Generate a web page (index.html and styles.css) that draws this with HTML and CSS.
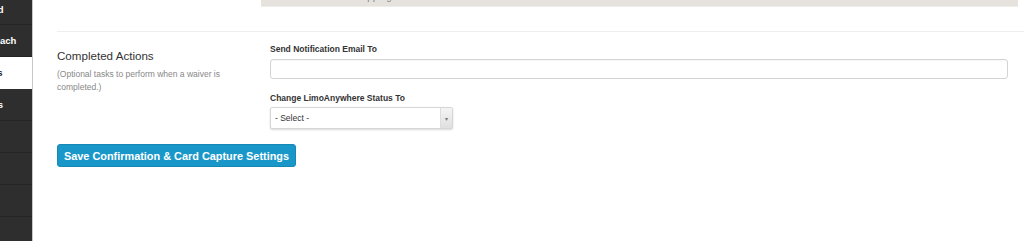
FILE: index.html
```html
<!DOCTYPE html>
<html lang="en">
<head>
  <meta charset="UTF-8" />
  <title>Confirmation Settings</title>
  <link rel="stylesheet" href="styles.css">
</head>
<body>
  <div class="layout">
    <div class="sidebar">
      <ul class="side-menu">
        <li class="first">Signed</li>
        <li>Approach</li>
        <li class="active">Emails</li>
        <li>Details</li>
        <li></li>
        <li></li>
        <li></li>
        <li></li>
      </ul>
    </div>

    <div class="main">
      <div class="note-box">
        <span class="note-text">Waiver shipping</span>
      </div>

      <hr class="divider">

      <div class="row">
        <div class="row-info">
          <h3>Completed Actions</h3>
          <p>(Optional tasks to perform when a waiver is completed.)</p>
        </div>
        <div class="row-fields">
          <label for="notify">Send Notification Email To</label>
          <input type="text" id="notify" class="text-input">

          <label for="status">Change LimoAnywhere Status To</label>
          <div class="select-box">
            <span class="select-value">- Select -</span>
            <span class="select-arrow">&#9662;</span>
          </div>
        </div>
      </div>

      <button class="save-btn">Save Confirmation &amp; Card Capture Settings</button>
    </div>
  </div>
</body>
</html>
```

FILE: styles.css
```css
body {
  margin: 0;
  font-family: 'Liberation Sans', Arial, sans-serif;
  background: #fff;
  color: #333;
  overflow: hidden;
}

.layout {
  display: flex;
  height: 241px;
}

/* Sidebar */
.sidebar {
  width: 32px;
  flex-shrink: 0;
  background: #2e2e2e;
  border-right: 1px solid #c8c8c8;
  overflow: hidden;
}

.side-menu {
  list-style: none;
  margin: 0 0 0 -28px;
  padding: 0;
  width: 60px;
}

.side-menu li {
  height: 31px;
  border-bottom: 1px solid #242424;
  color: #fff;
  font-size: 9.5px;
  font-weight: bold;
  line-height: 31px;
  white-space: nowrap;
}

.side-menu li.first {
  height: 24px;
  line-height: 20px;
}

.side-menu li.active {
  background: #fff;
  color: #222;
  border-bottom-color: #fff;
}

/* Main */
.main {
  flex: 1;
  padding: 0 16px 0 24px;
}

.note-box {
  margin: 0 -10px 0 204px;
  height: 6px;
  background: #e6e3df;
  border-bottom: 1px solid #efedea;
  position: relative;
  overflow: hidden;
}

.note-text {
  position: absolute;
  left: 60px;
  top: -9px;
  font-size: 10px;
  color: #888;
}

.divider {
  border: 0;
  border-top: 1px solid #eeeeee;
  margin: 24px -16px 0 0;
}

.row {
  display: flex;
  padding-top: 12px;
}

.row-info {
  width: 213px;
  flex-shrink: 0;
}

.row-info h3 {
  margin: 5px 0 0;
  font-size: 11.6px;
  font-weight: normal;
  color: #333;
}

.row-info p {
  margin: 6px 0 0;
  font-size: 8.5px;
  line-height: 13px;
  color: #888;
  width: 180px;
}

.row-fields {
  flex: 1;
  display: flex;
  flex-direction: column;
}

.row-fields label {
  font-size: 8.5px;
  font-weight: bold;
  color: #333;
  margin-bottom: 5px;
}

.text-input {
  height: 20px;
  border: 1px solid #d4d4d4;
  border-radius: 3px;
  box-sizing: border-box;
  margin: 0 0 14px;
  padding: 0 6px;
  box-shadow: inset 0 1px 1px rgba(0, 0, 0, 0.04);
}

.select-box {
  width: 183px;
  height: 22px;
  margin-top: -1px;
  box-sizing: border-box;
  display: flex;
  align-items: center;
  border: 1px solid #d6d6d6;
  border-radius: 2px;
  box-shadow: 0 1px 2px rgba(0, 0, 0, 0.15);
  background: #fff;
}

.select-value {
  flex: 1;
  padding-left: 4px;
  font-size: 8.5px;
  color: #333;
}

.select-arrow {
  width: 11px;
  height: 100%;
  border-left: 1px solid #ddd;
  background: linear-gradient(#f4f4f4, #e0e0e0);
  font-size: 6px;
  color: #777;
  display: flex;
  align-items: center;
  justify-content: center;
}

.save-btn {
  margin-top: 15px;
  height: 23px;
  width: 239px;
  padding: 0;
  background: #1a97c9;
  color: #fff;
  border: 1px solid #1588b6;
  border-radius: 3px;
  font-family: 'Liberation Sans', Arial, sans-serif;
  font-size: 10.9px;
  font-weight: bold;
  cursor: pointer;
}
```
